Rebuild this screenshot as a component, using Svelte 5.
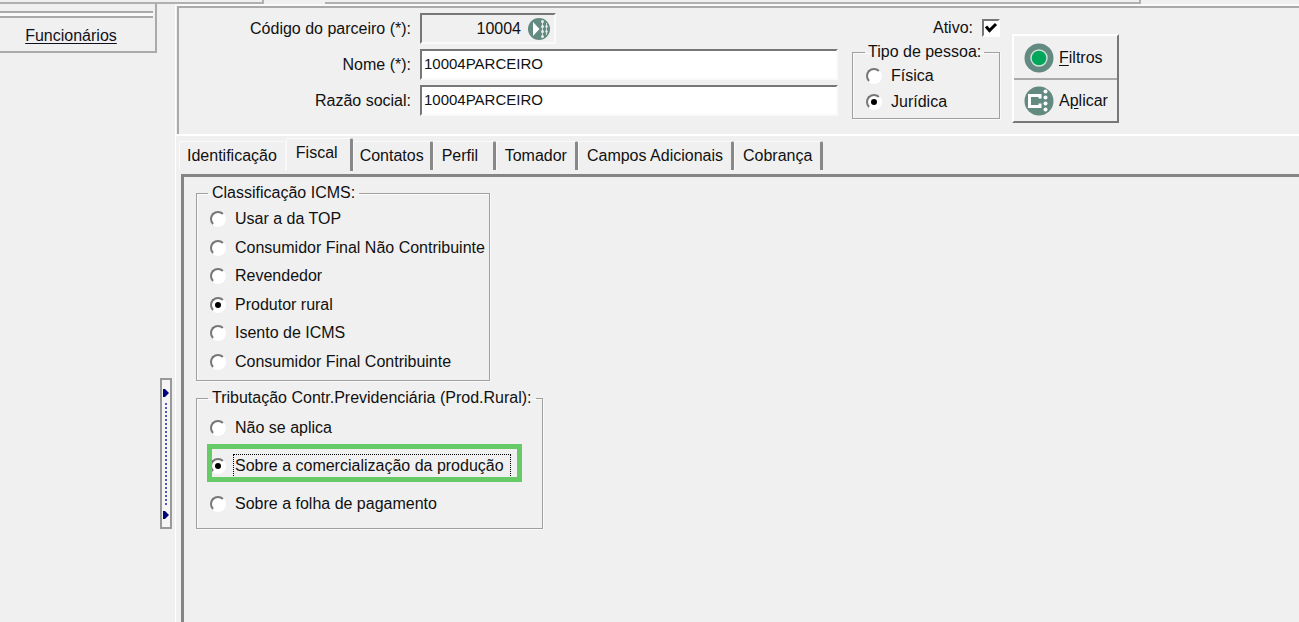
<script lang="ts">
  const tabs = ['Identificação', 'Fiscal', 'Contatos', 'Perfil', 'Tomador', 'Campos Adicionais', 'Cobrança'];
  const icmsOptions = [
    'Usar a da TOP',
    'Consumidor Final Não Contribuinte',
    'Revendedor',
    'Produtor rural',
    'Isento de ICMS',
    'Consumidor Final Contribuinte'
  ];
  const ruralOptions = ['Não se aplica', 'Sobre a comercialização da produção', 'Sobre a folha de pagamento'];

  let activeTab = $state('Fiscal');
  let code = $state('10004');
  let name = $state('10004PARCEIRO');
  let company = $state('10004PARCEIRO');
  let active = $state(true);
  let person = $state('Jurídica');
  let icms = $state('Produtor rural');
  let rural = $state('Sobre a comercialização da produção');
</script>

<div class="app">
  <div class="toolbar">
    <span class="bar first"></span>
    <span class="bar second"></span>
  </div>
  <div class="body">
    <aside>
      <div class="rails"></div>
      <a href="#funcionarios">Funcionários</a>
    </aside>

    <div class="gutter">
      <button class="splitter" aria-label="Painel lateral">
        <svg viewBox="0 0 6 8"><path d="M0 0H2L6 4L2 8H0Z" /></svg>
        <span class="dots"></span>
        <svg viewBox="0 0 6 8"><path d="M0 0H2L6 4L2 8H0Z" /></svg>
      </button>
    </div>

    <main>
      <header>
        <div class="fields">
          <label for="code">Código do parceiro (*):</label>
          <div class="sunken code">
            <input id="code" bind:value={code} />
            <button class="lookup" aria-label="Pesquisar parceiro">
              <svg viewBox="0 0 22 22">
                <circle cx="11" cy="11" r="11" fill="#638a80" />
                <path d="M5 4L11.500 11L5 18Z" fill="#fff" />
                <path d="M14.500 2.500V19.500M18.500 5V17" stroke="#cfdcd8" stroke-width="1" />
                <g fill="#e4edea">
                  <circle cx="14.500" cy="3.500" r="1.500" /><circle cx="14.500" cy="8.500" r="1.500" />
                  <circle cx="14.500" cy="13.500" r="1.500" /><circle cx="14.500" cy="18.500" r="1.500" />
                  <circle cx="18.500" cy="8.500" r="1.200" /><circle cx="18.500" cy="13.500" r="1.200" />
                </g>
              </svg>
            </button>
          </div>
          <label for="name">Nome (*):</label>
          <div class="sunken white"><input id="name" bind:value={name} /></div>
          <label for="company">Razão social:</label>
          <div class="sunken white"><input id="company" bind:value={company} /></div>
        </div>

        <div class="status">
          <label class="check">Ativo: <input type="checkbox" bind:checked={active} /></label>
          <fieldset class="person">
            <legend>Tipo de pessoa:</legend>
            <div class="options">
              {#each ['Física', 'Jurídica'] as option}
                <label class="option">
                  <input type="radio" name="person" value={option} bind:group={person} />
                  <span>{option}</span>
                </label>
              {/each}
            </div>
          </fieldset>
        </div>

        <div class="actions">
          <button>
            <svg viewBox="0 0 30 30">
              <circle cx="15" cy="15" r="14.5" fill="#638a80" />
              <circle cx="15" cy="15" r="8" fill="#00a65a" stroke="#cfe3da" stroke-width="1.4" />
            </svg>
            <span><u>F</u>iltros</span>
          </button>
          <button>
            <svg viewBox="0 0 30 30">
              <circle cx="15" cy="15" r="14.5" fill="#638a80" />
              <path d="M16 12.500V9.500H5.500V20.500H16V17.500" fill="none" stroke="#fff" stroke-width="3" />
              <g fill="#fff">
                <circle cx="21.500" cy="5.500" r="2" /><circle cx="21.500" cy="11.500" r="2" />
                <circle cx="21.500" cy="17.500" r="2" /><circle cx="21.500" cy="23.500" r="2" />
              </g>
            </svg>
            <span>A<u>p</u>licar</span>
          </button>
        </div>
      </header>

      <div class="tabs" role="tablist">
        {#each tabs as tab}
          <button role="tab" aria-selected={tab === activeTab} class:current={tab === activeTab} onclick={() => (activeTab = tab)}>{tab}</button>
        {/each}
      </div>

      <section class="panel" role="tabpanel">
        <fieldset class="icms">
          <legend>Classificação ICMS:</legend>
          <div class="options">
            {#each icmsOptions as option}
              <label class="option">
                <input type="radio" name="icms" value={option} bind:group={icms} />
                <span>{option}</span>
              </label>
            {/each}
          </div>
        </fieldset>
        <fieldset class="rural">
          <legend>Tributação Contr.Previdenciária (Prod.Rural):</legend>
          <div class="options">
            {#each ruralOptions as option}
              <label class="option" class:marked={option === rural}>
                <input type="radio" name="rural" value={option} bind:group={rural} />
                <span>{option}</span>
              </label>
            {/each}
          </div>
        </fieldset>
      </section>
    </main>
  </div>
</div>

<style>
  :global(body) {
    margin: 0;
    background: #f0f0f0;
  }
  .app {
    display: flex;
    flex-direction: column;
    min-height: 100vh;
    font: 16px/20px 'Liberation Sans', Arial, sans-serif;
    color: #111;
  }
  .app * {
    box-sizing: border-box;
  }
  button,
  input {
    font: inherit;
    color: inherit;
    margin: 0;
  }
  .toolbar {
    display: flex;
    gap: 61px;
    height: 4px;
  }
  .bar {
    border-bottom: 2px solid #b0b0b0;
    border-right: 2px solid #b0b0b0;
  }
  .first {
    width: 264px;
  }
  .second {
    width: 816px;
  }
  .body {
    display: flex;
    flex: 1;
  }
  aside {
    flex: none;
    align-self: flex-start;
    width: 157px;
    height: 49px;
    border: solid #aaa;
    border-width: 0 2px 2px 0;
    padding-top: 7px;
  }
  .rails {
    height: 7px;
    margin-right: 2px;
    border: solid #aaa;
    border-width: 2px 0;
    background: #fafafa;
  }
  aside a {
    display: block;
    margin-top: 8px;
    padding-right: 13px;
    text-align: center;
    color: #101020;
    text-underline-offset: 2px;
  }
  .gutter {
    flex: none;
    width: 18px;
    padding: 374px 0 0 3px;
  }
  .splitter {
    display: flex;
    flex-direction: column;
    align-items: center;
    justify-content: space-between;
    width: 12px;
    height: 151px;
    padding: 9px 0 8px;
    border: 2px solid #999;
    background: #f5f5f5;
  }
  .splitter svg {
    width: 6px;
    height: 8px;
    fill: #00007c;
  }
  .dots {
    height: 102px;
    border-left: 2px dotted #5555b5;
  }
  main {
    flex: 1;
    min-width: 0;
    display: flex;
    flex-direction: column;
    border-left: 1px solid #fff;
    border-top: 2px solid #fafafa;
  }
  header {
    display: flex;
    align-items: flex-start;
    height: 128px;
    margin-left: 1px;
    padding-top: 5px;
    border: solid #aaa;
    border-width: 2px 0 0 2px;
  }
  .fields {
    display: grid;
    grid-template-columns: 232px 418px;
    column-gap: 9px;
    row-gap: 5px;
    align-items: center;
  }
  .fields > label {
    text-align: right;
  }
  .sunken {
    display: flex;
    align-items: center;
    height: 31px;
    border: 2px solid;
    border-color: #777 #fafafa #fafafa #777;
  }
  .sunken input {
    flex: 1;
    min-width: 0;
    padding: 0 3px;
    border: 0;
    background: none;
    outline: none;
  }
  .white {
    background: #fff;
  }
  .white input {
    padding: 0 2px 1px;
    font-size: 15px;
  }
  .code {
    width: 136px;
    gap: 4px;
    padding-right: 4px;
  }
  .code input {
    text-align: right;
  }
  .lookup {
    display: flex;
    padding: 0;
    border: 0;
    background: none;
  }
  .lookup svg {
    width: 22px;
    height: 22px;
  }
  .status {
    width: 148px;
    margin: 5px 0 0 14px;
  }
  .check {
    display: flex;
    justify-content: flex-end;
    align-items: center;
    gap: 9px;
  }
  .check input {
    appearance: none;
    width: 18px;
    height: 18px;
    border: 2px solid;
    border-color: #777 #fff #fff #777;
    background: #fff
      url("data:image/svg+xml,%3Csvg xmlns='http://www.w3.org/2000/svg' viewBox='0 0 14 14'%3E%3Cpath d='M2 5.500L5.500 9.500L12 3' fill='none' stroke='black' stroke-width='3'/%3E%3C/svg%3E");
  }
  .check input:not(:checked) {
    background: #fff;
  }
  fieldset {
    min-width: 0;
    margin: 0;
    border: 1px solid #a0a0a0;
    box-shadow: 1px 1px #fafafa, inset 1px 1px #fafafa;
  }
  legend {
    height: 20px;
    padding: 0 4px;
    white-space: nowrap;
  }
  .options {
    display: grid;
    grid-auto-rows: 1fr;
  }
  .option {
    display: flex;
    align-items: center;
    gap: 9px;
    white-space: nowrap;
  }
  .option input {
    appearance: none;
    flex: none;
    display: grid;
    place-items: center;
    width: 16px;
    height: 16px;
    border: 2px solid;
    border-color: #777 #fff #fff #777;
    border-radius: 50%;
    background: #fff;
  }
  .option input:checked::before {
    content: '';
    width: 6px;
    height: 6px;
    border-radius: 50%;
    background: #000;
  }
  .person {
    height: 77px;
    padding: 1px 10px 0 13px;
    margin-top: 4px;
  }
  .person legend {
    padding: 0 3px;
    margin-left: -1px;
  }
  .person .options {
    height: 52px;
  }
  .actions {
    width: 107px;
    margin: 21px 0 0 12px;
    border: 2px solid;
    border-color: #fff #777 #777 #fff;
  }
  .actions button {
    display: flex;
    align-items: center;
    gap: 5px;
    width: 100%;
    height: 42px;
    padding: 1px 0 0 10px;
    border: 0;
    background: none;
  }
  .actions button + button {
    border-top: 2px solid #aaa;
    height: 43px;
  }
  .actions svg {
    flex: none;
    width: 30px;
    height: 30px;
  }
  u {
    text-underline-offset: 2px;
  }
  .tabs {
    display: flex;
    align-items: flex-end;
    height: 37px;
    padding-left: 3px;
    border-top: 2px solid #fff;
  }
  .tabs button {
    height: 29px;
    margin-bottom: 1px;
    padding: 0 8px;
    border: solid;
    border-width: 1px 3px 0 1px;
    border-color: #fafafa #888 #fafafa #fafafa;
    border-radius: 2px 2px 0 0;
    background: none;
    text-align: left;
    white-space: nowrap;
  }
  .tabs button:first-child {
    padding: 0 8px 0 7px;
    border-right: 1px solid #f7f7f7;
  }
  .tabs .current {
    height: 33px;
    margin-bottom: 0;
    padding: 0 12px 4px 9px;
  }
  .tabs .current + button {
    padding: 0 6px;
  }
  .tabs button:nth-child(4) {
    min-width: 63px;
  }
  .panel {
    flex: 1;
    display: flex;
    flex-direction: column;
    align-items: flex-start;
    gap: 7px;
    margin: 3px 0 0 5px;
    padding: 6px 12px;
    border: solid #858585;
    border-width: 3px 0 0 3px;
  }
  .icms {
    width: 294px;
    height: 198px;
    padding: 2px 6px 0 13px;
  }
  .icms .options {
    height: 171px;
  }
  .rural {
    width: 347px;
    height: 141px;
    padding: 1px 6px 0 13px;
  }
  .rural .options {
    height: 114px;
  }
  .icms legend,
  .rural legend {
    margin-left: -2px;
  }
  .marked {
    position: relative;
  }
  .marked span {
    padding-right: 5px;
    outline: 1px dotted #000;
    outline-offset: 1px;
  }
  .marked::after {
    content: '';
    position: absolute;
    inset: -3px 14px 3px -3px;
    border: 5px solid #66cb66;
    pointer-events: none;
  }
</style>
